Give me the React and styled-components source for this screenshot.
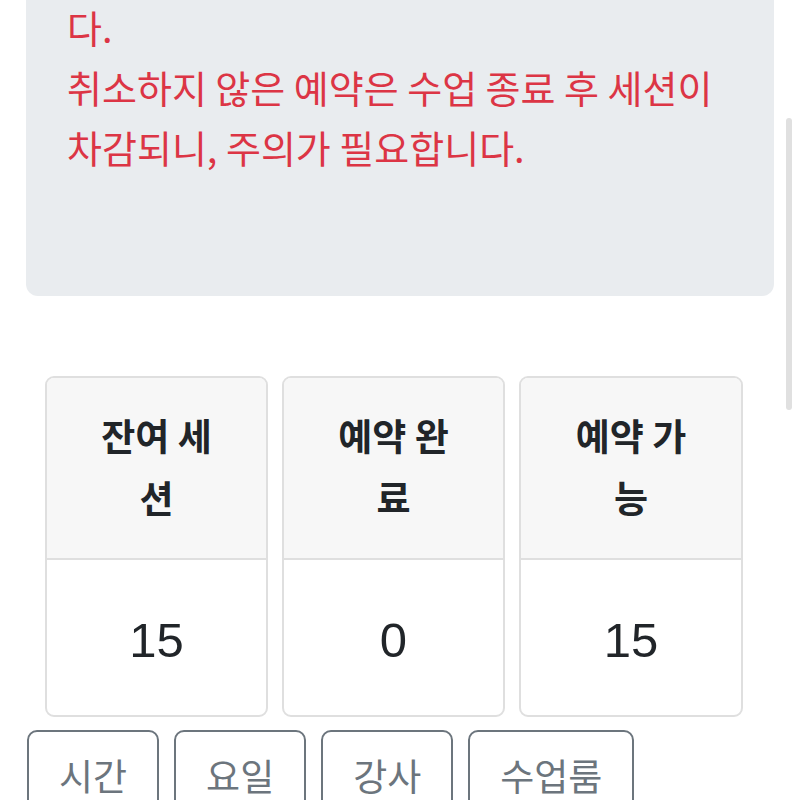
import React from 'react'
import styled, { createGlobalStyle } from 'styled-components'

const GlobalStyle = createGlobalStyle`
  html, body {
    margin: 0;
    padding: 0;
    height: 800px;
    overflow: hidden;
    background: #ffffff;
  }

  body {
    font-family: 'Liberation Sans', 'Noto Sans CJK KR', sans-serif;
    color: #212529;
  }

  * {
    box-sizing: border-box;
  }
`

const stats = [
  { label: '잔여 세션', value: 15 },
  { label: '예약 완료', value: 0 },
  { label: '예약 가능', value: 15 },
]

const filters = ['시간', '요일', '강사', '수업룸']

const App = () => {
  return (
    <Page>
      <GlobalStyle />

      <Notice>
        다.
        <br />
        취소하지 않은 예약은 수업 종료 후 세션이 차감되니, 주의가 필요합니다.
      </Notice>

      <StatGrid>
        {stats.map((s) => (
          <StatCard key={s.label}>
            <StatHead>{s.label}</StatHead>
            <StatBody>{s.value}</StatBody>
          </StatCard>
        ))}
      </StatGrid>

      <FilterRow>
        {filters.map((f) => (
          <FilterButton key={f} type="button">
            {f}
          </FilterButton>
        ))}
      </FilterRow>

      <ScrollThumb />
    </Page>
  )
}

const Page = styled.div`
  position: relative;
  height: 800px;
  padding: 0 26px;
`

const Notice = styled.div`
  margin-top: -30px;
  padding: 27px 41px 119px 41px;
  background: #e9ecef;
  border-radius: 12px;
  color: #dc3545;
  font-family: 'Noto Sans CJK KR', 'Liberation Sans', sans-serif;
  font-size: 38px;
  line-height: 60px;
`

const StatGrid = styled.div`
  display: grid;
  grid-template-columns: 223px 223px 224px;
  gap: 14px;
  margin: 80px 0 0 19px;
`

const StatCard = styled.div`
  display: flex;
  flex-direction: column;
  border: 2px solid #dfdfdf;
  border-radius: 9px;
  overflow: hidden;
  background: #ffffff;
`

const StatHead = styled.div`
  height: 182px;
  padding: 26px 42px 0;
  background: #f7f7f7;
  border-bottom: 2px solid #dfdfdf;
  text-align: center;
  font-family: 'Noto Sans CJK KR', sans-serif;
  font-weight: 700;
  font-size: 37px;
  line-height: 62px;
`

const StatBody = styled.div`
  height: 155px;
  display: flex;
  align-items: center;
  justify-content: center;
  font-size: 49px;
  padding-top: 4px;
  color: #212529;
`

const FilterRow = styled.div`
  display: flex;
  gap: 15px;
  margin-top: 13px;
  padding-left: 1px;
`

const FilterButton = styled.button`
  padding: 16px 30px;
  border: 2px solid #6c757d;
  border-radius: 10px;
  background: transparent;
  color: #6c757d;
  font-family: 'Noto Sans CJK KR', sans-serif;
  font-size: 37px;
  line-height: 54px;
`

const ScrollThumb = styled.div`
  position: absolute;
  top: 148px;
  right: 8px;
  width: 6px;
  height: 292px;
  border-radius: 3px;
  background: #e0e0e0;
`

export default App
